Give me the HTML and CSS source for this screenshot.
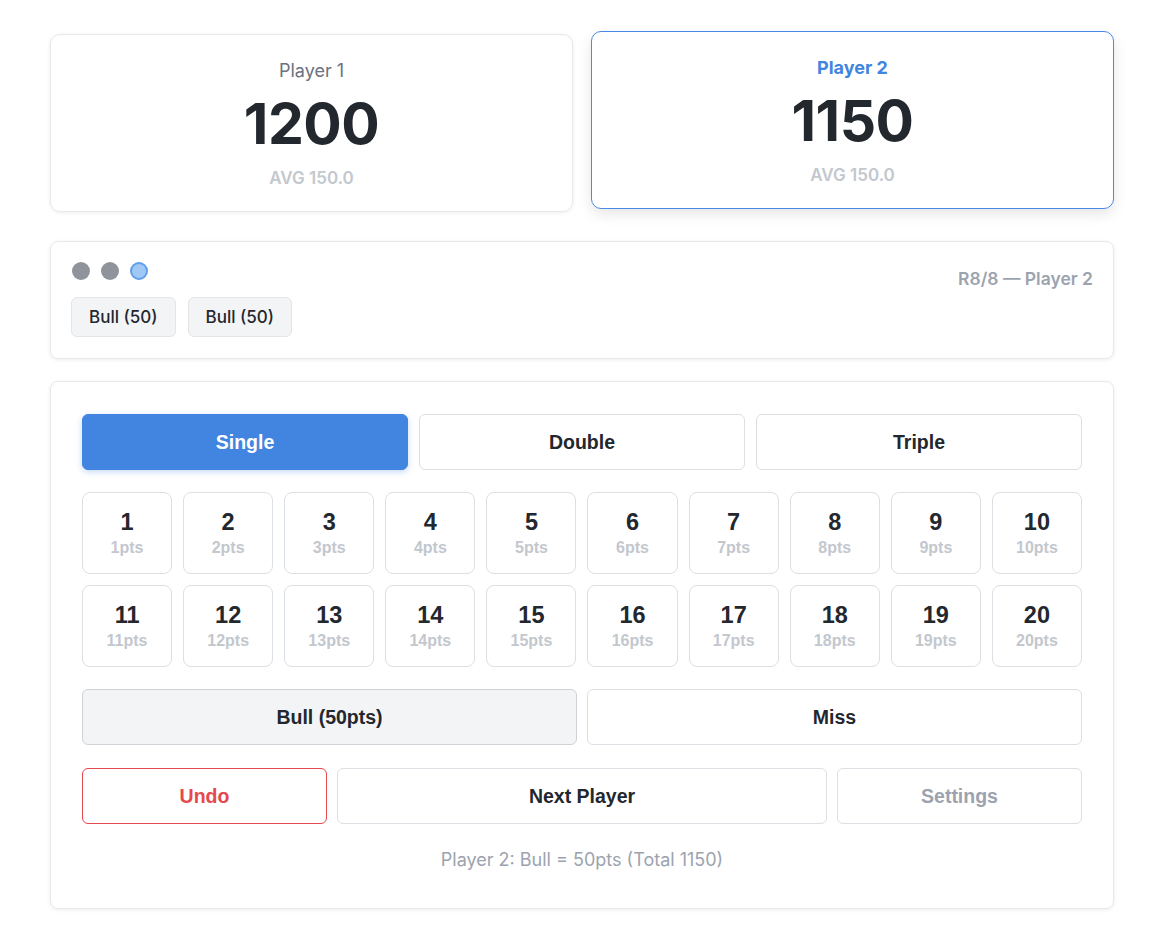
FILE: index.html
```html
<!DOCTYPE html>
<html lang="en">
  <head>
    <meta charset="UTF-8" />
    <meta name="viewport" content="width=device-width, initial-scale=1.0" />
    <title>Darts Scoreboard</title>
    <link rel="stylesheet" href="styles.css">
  </head>
  <body>
    <div class="container">
      <!-- 플레이어 점수 -->
      <div class="players">
        <div class="player-card">
          <div class="player-name">Player 1</div>
          <div class="player-score">1200</div>
          <div class="player-avg">AVG 150.0</div>
        </div>
        <div class="player-card active">
          <div class="player-name">Player 2</div>
          <div class="player-score">1150</div>
          <div class="player-avg">AVG 150.0</div>
        </div>
      </div>

      <!-- 현재 라운드 -->
      <div class="panel round-panel">
        <div class="round-left">
          <div class="dots">
            <span class="dot"></span>
            <span class="dot"></span>
            <span class="dot current"></span>
          </div>
          <div class="throws">
            <span class="throw-chip">Bull (50)</span>
            <span class="throw-chip">Bull (50)</span>
          </div>
        </div>
        <div class="round-info">R8/8 — Player 2</div>
      </div>

      <!-- 입력 패널 -->
      <div class="panel input-panel">
        <div class="modes">
          <button class="btn mode selected">Single</button>
          <button class="btn mode">Double</button>
          <button class="btn mode">Triple</button>
        </div>

        <div class="numbers" id="numbers"></div>

        <div class="specials">
          <button class="btn bull">Bull (50pts)</button>
          <button class="btn">Miss</button>
        </div>

        <div class="actions">
          <button class="btn undo">Undo</button>
          <button class="btn">Next Player</button>
          <button class="btn settings">Settings</button>
        </div>

        <p class="status">Player 2: Bull = 50pts (Total 1150)</p>
      </div>
    </div>

    <script>
      // 숫자 버튼 1~20 생성
      const numbers = document.getElementById("numbers");
      for (let i = 1; i <= 20; i++) {
        const btn = document.createElement("button");
        btn.className = "num";
        btn.innerHTML = `<span class="num-value">${i}</span><span class="num-pts">${i}pts</span>`;
        numbers.appendChild(btn);
      }
    </script>
  </body>
</html>
```

FILE: styles.css
```css
/* 기본 스타일 */
body {
  margin: 0;
  background: #fff;
  font-family: Inter, "Noto Sans", sans-serif;
  color: #23272e;
}

.container {
  width: 1064px;
  padding: 31px 0 40px 50px;
}

/* 플레이어 카드 */
.players {
  display: grid;
  grid-template-columns: 1fr 1fr;
  gap: 18px;
  align-items: start;
  margin-bottom: 29px;
}

.player-card {
  margin-top: 3px;
  height: 178px;
  box-sizing: border-box;
  border: 1px solid #e6e8eb;
  border-radius: 10px;
  box-shadow: 0 1px 4px rgba(0, 0, 0, 0.07);
  text-align: center;
  padding-top: 24px;
}

.player-card.active {
  margin-top: 0;
  border-color: #4a8ae2;
  box-shadow: 0 5px 14px rgba(0, 0, 0, 0.1);
}

.player-name {
  font-size: 18px;
  line-height: 24px;
  color: #6b7280;
}

.active .player-name {
  color: #4285e0;
  font-weight: 700;
}

.player-score {
  font-size: 57px;
  font-weight: 700;
  line-height: 58px;
  margin-top: 12px;
  letter-spacing: -0.5px;
}

.player-avg {
  margin-top: 15px;
  font-size: 17px;
  font-weight: 600;
  color: #c3c7ce;
}

/* 공통 패널 */
.panel {
  border: 1px solid #e6e8eb;
  border-radius: 8px;
  box-shadow: 0 1px 4px rgba(0, 0, 0, 0.07);
}

.round-panel {
  display: flex;
  justify-content: space-between;
  padding: 20px 20px 21px 20px;
  margin-bottom: 22px;
}

.dots {
  display: flex;
  gap: 11px;
  padding-left: 1px;
}

.dot {
  width: 18px;
  height: 18px;
  border-radius: 50%;
  background: #8f949c;
  box-sizing: border-box;
}

.dot.current {
  background: #a0c8f5;
  border: 2px solid #5f9ee9;
}

.throws {
  display: flex;
  gap: 12px;
  margin-top: 17px;
}

.throw-chip {
  padding: 10px 17px 9px;
  line-height: 19px;
  font-size: 17px;
  font-weight: 500;
  background: #f3f4f6;
  border: 1px solid #e3e5e8;
  border-radius: 6px;
  color: #23272e;
}

.round-info {
  padding-top: 6px;
  font-size: 17.5px;
  font-weight: 600;
  color: #9ca3af;
}

/* 입력 패널 */
.input-panel {
  padding: 32px 31px 38px 31px;
}

.btn {
  height: 56px;
  background: #fff;
  border: 1px solid #dcdfe3;
  border-radius: 6px;
  font-family: "Liberation Sans", Arial, sans-serif;
  font-size: 19.5px;
  font-weight: 700;
  color: #23272e;
  cursor: pointer;
}

.modes {
  display: grid;
  grid-template-columns: repeat(3, 1fr);
  gap: 11px;
}

.btn.selected {
  background: #4285e0;
  border-color: #4285e0;
  color: #fff;
  box-shadow: 0 2px 6px rgba(66, 133, 224, 0.3);
}

.numbers {
  display: grid;
  grid-template-columns: repeat(10, 1fr);
  gap: 11px;
  margin-top: 22px;
}

.num {
  height: 82px;
  background: #fff;
  border: 1px solid #dcdfe3;
  border-radius: 8px;
  font-family: "Liberation Sans", Arial, sans-serif;
  display: flex;
  flex-direction: column;
  align-items: center;
  justify-content: center;
  padding: 0;
  cursor: pointer;
}

.num-value {
  font-size: 23.5px;
  font-weight: 700;
  color: #23272e;
  line-height: 25px;
}

.num-pts {
  margin-top: 4px;
  font-size: 16px;
  font-weight: 700;
  color: #c3c7ce;
  line-height: 18px;
}

.specials {
  display: grid;
  grid-template-columns: 1fr 1fr;
  gap: 10px;
  margin-top: 22px;
}

.btn.bull {
  background: #f3f4f6;
  border-color: #cfd3d8;
}

.actions {
  display: grid;
  grid-template-columns: 1fr 2fr 1fr;
  gap: 10px;
  margin-top: 23px;
}

.btn.undo {
  border-color: #e5484d;
  color: #e5484d;
}

.btn.settings {
  color: #9ca3af;
}

.status {
  margin: 25px 0 0;
  text-align: center;
  font-size: 18px;
  color: #9ca3af;
}
```
